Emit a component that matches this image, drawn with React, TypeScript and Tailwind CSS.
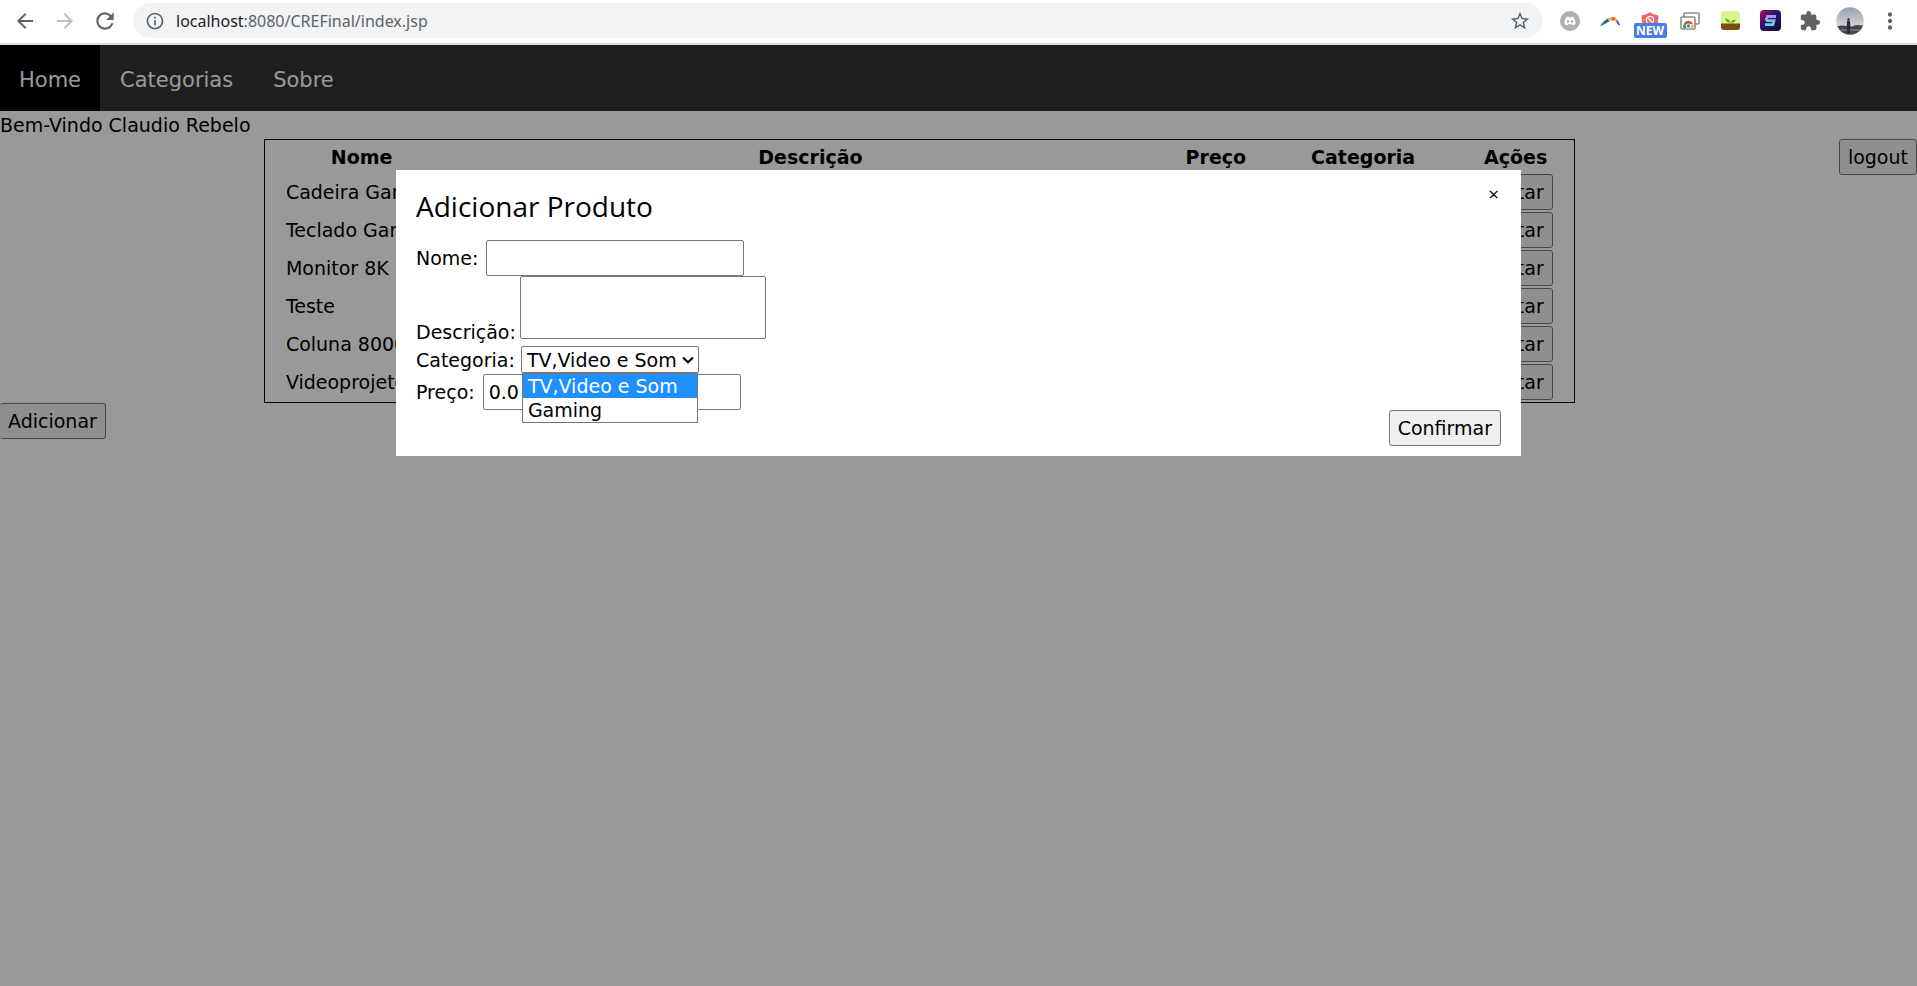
import React from "react";
import {
  MdArrowBack,
  MdArrowForward,
  MdExtension,
  MdInfoOutline,
  MdMoreVert,
  MdRefresh,
  MdStarBorder,
} from "react-icons/md";

const products = [
  "Cadeira Gaming",
  "Teclado Gaming",
  "Monitor 8K",
  "Teste",
  "Coluna 8000W",
  "Videoprojetor",
];

const columns = [
  { title: "Nome", width: "w-[14.6%]" },
  { title: "Descrição", width: "w-[54.3%]" },
  { title: "Preço", width: "w-[7.9%]" },
  { title: "Categoria", width: "w-[14.5%]" },
  { title: "Ações", width: "w-[8.7%]" },
];

const buttonStyle =
  "h-9 shrink-0 rounded-[3px] border border-[#767676] bg-[#efefef] px-2 leading-7 text-black";
const fieldStyle = "rounded-[2px] border border-[#767676] bg-white px-[5px] text-black";

function DiscordIcon() {
  return (
    <svg width="20" height="20" viewBox="0 0 20 20" aria-hidden="true">
      <circle cx="10" cy="10" r="10" fill="#b0b0b0" />
      <path
        d="M6.600 6.200 8.400 5.600l.5.8h2.200l.5-.8 1.800.6c1.400 1.800 2.200 4.200 2 6.800-.9.8-1.900 1.200-2.900 1.400l-.7-1.100H8.200l-.7 1.100c-1-.2-2-.6-2.900-1.400-.2-2.600.6-5 2-7.200z"
        fill="#fff"
      />
      <circle cx="8" cy="10.400" r="1.200" fill="#a4a4a4" />
      <circle cx="12" cy="10.400" r="1.200" fill="#a4a4a4" />
    </svg>
  );
}

function BoomerangIcon() {
  return (
    <svg width="20" height="20" viewBox="0 0 20 20" aria-hidden="true">
      <path d="M0 14.500 4 10.300 6.200 12.200 1.800 14.800z" fill="#2e8b57" />
      <path d="M3.600 10.600 8.200 7.200 9.400 10.200 5.400 12.600z" fill="#1d5fae" />
      <path d="M7.800 7.400 12 6 11.800 9.200 9 10.400z" fill="#f6b93b" />
      <path d="M11.600 6 15.400 6.400 14.600 9.800 11.600 9.200z" fill="#e8573a" />
      <path d="M15 6.300 17.600 8.800 16.600 11.600 14.200 9.600z" fill="#f6b93b" />
      <path d="M17.400 8.600 20 14 18.600 14.600 16.400 11.400z" fill="#1d5fae" />
    </svg>
  );
}

function BlockerIcon() {
  return (
    <span className="relative flex h-full w-full justify-center">
      <svg className="mt-3" width="20" height="20" viewBox="0 0 20 20" aria-hidden="true">
        <path d="M10 0 13 2 18.500 3.500 18 14 10 19 2 14 1.500 3.500 7 2z" fill="#ee6a6e" />
        <circle cx="10" cy="8" r="3.600" fill="none" stroke="#fff" strokeWidth="1.200" />
        <path d="m8 6 4 4" stroke="#fff" strokeWidth="1.200" />
      </svg>
      <span className="absolute top-[23px] h-[15px] w-[33px] rounded-[2px] bg-[#4a7de4] text-center font-['Open_Sans',sans-serif] text-xs leading-[15px] font-bold text-white">
        NEW
      </span>
    </span>
  );
}

function TabsIcon() {
  return (
    <svg width="20" height="18" viewBox="0 0 20 18" aria-hidden="true">
      <rect x="4" y="1" width="15" height="11" rx="1" fill="#fff" stroke="#8c8c8c" strokeWidth="1.600" />
      <rect x="1" y="5" width="14" height="12" rx="1" fill="#fff" stroke="#8c8c8c" strokeWidth="1.600" />
      <path d="M3 16a5.300 5.300 0 0 1 1.500-5L8 14v2z" fill="#2da94f" />
      <path d="M3.800 11.500a5.200 5.200 0 0 1 9.200 0l-4.500 1.500z" fill="#e8453c" />
      <path d="M13 11.500a5 5 0 0 1 .4 4.500H9z" fill="#fbc116" />
      <circle cx="8.500" cy="14" r="2.200" fill="#4285f4" stroke="#fff" />
    </svg>
  );
}

function PlantIcon() {
  return (
    <svg width="19" height="19" viewBox="0 0 19 19" aria-hidden="true">
      <rect width="19" height="19" rx="3" fill="#d8f690" />
      <path d="M0 12.500h19V16a3 3 0 0 1-3 3H3a3 3 0 0 1-3-3z" fill="#7c4a14" />
      <path
        d="M9.200 12.500c0-3-1.700-4.500-5-5 .2 2.700 1.900 4 4.300 3.900zM9.800 12.500c0-2.400 1.600-3.500 4.800-3.900-.2 2.200-1.800 3.300-4.200 3.300z"
        fill="#6aa51c"
      />
    </svg>
  );
}

function SIcon() {
  return (
    <svg width="21" height="21" viewBox="0 0 21 21" aria-hidden="true">
      <defs>
        <linearGradient id="s-back" x1="0" y1="0" x2="1" y2="1">
          <stop offset="0" stopColor="#b3134d" />
          <stop offset=".4" stopColor="#35126b" />
          <stop offset="1" stopColor="#120b3c" />
        </linearGradient>
        <linearGradient id="s-front" x1="0" y1="0" x2="0" y2="1">
          <stop offset="0" stopColor="#b88cf0" />
          <stop offset="1" stopColor="#46e3d2" />
        </linearGradient>
      </defs>
      <rect width="21" height="21" rx="4" fill="url(#s-back)" />
      <path
        d="M16 6.500H7.500L6.300 9.500l.9 1.200H14l-1.200 4H5"
        fill="none"
        stroke="url(#s-front)"
        strokeWidth="2.800"
      />
    </svg>
  );
}

function Avatar() {
  return (
    <svg width="28" height="28" viewBox="0 0 28 28" aria-hidden="true">
      <defs>
        <clipPath id="avatar-clip">
          <circle cx="14" cy="14" r="13.700" />
        </clipPath>
        <linearGradient id="avatar-sky" x1="0" y1="0" x2="0" y2="1">
          <stop offset="0" stopColor="#93a0b3" />
          <stop offset="1" stopColor="#d9d5d8" />
        </linearGradient>
      </defs>
      <g clipPath="url(#avatar-clip)">
        <rect width="28" height="20" fill="url(#avatar-sky)" />
        <path d="M0 19.500 6 18.500l10 1 4-1.500 8 .5V28H0z" fill="#46434a" />
        <path d="M0 22h28v2H0z" fill="#6f696c" />
        <circle cx="12.500" cy="12.500" r="1.200" fill="#1c2233" />
        <path d="M11 14h3l.4 5-.6 7h-2.400l-.6-7z" fill="#232a44" />
      </g>
    </svg>
  );
}

function BrowserBar() {
  const actions = [
    { name: "Discord", icon: <DiscordIcon /> },
    { name: "Boomerang", icon: <BoomerangIcon /> },
    { name: "Blocker", icon: <BlockerIcon /> },
    { name: "Tabs", icon: <TabsIcon /> },
    { name: "Plant", icon: <PlantIcon /> },
    { name: "S", icon: <SIcon /> },
    { name: "Extensions", icon: <MdExtension size={22} /> },
    { name: "Profile", icon: <Avatar /> },
    { name: "Menu", icon: <MdMoreVert size={26} /> },
  ];
  return (
    <header className="flex h-[45px] items-start border-b-2 border-[#dadce0] bg-white pr-[7px] pl-[5px] text-[#5f6368]">
      <button aria-label="Back" className="flex h-[41px] w-10 items-center justify-center">
        <MdArrowBack size={24} />
      </button>
      <button
        aria-label="Forward"
        className="flex h-[41px] w-10 items-center justify-center text-[#bcbec0]"
      >
        <MdArrowForward size={24} />
      </button>
      <button aria-label="Reload" className="flex h-[41px] w-10 items-center justify-center">
        <MdRefresh size={26} />
      </button>
      <div className="mt-[3px] mr-[7px] ml-2 flex h-[35px] flex-1 items-center rounded-full bg-[#f1f3f4] px-3">
        <MdInfoOutline size={20} />
        <p className="ml-[11px] flex-1 font-['Noto_Sans',sans-serif] text-base">
          <span className="text-[#202124]">localhost</span>:8080/CREFinal/index.jsp
        </p>
        <button aria-label="Bookmark">
          <MdStarBorder size={22} />
        </button>
      </div>
      {actions.map((action) => (
        <button
          key={action.name}
          aria-label={action.name}
          className="flex h-[41px] w-10 items-center justify-center"
        >
          {action.icon}
        </button>
      ))}
    </header>
  );
}

function CategorySelect() {
  return (
    <div className="relative">
      <select
        id="categoria"
        className="block h-[27px] w-[178px] appearance-none rounded-[2px] border border-[#767676] bg-white px-[5px] leading-6 text-black"
      >
        <option>TV,Video e Som</option>
        <option>Gaming</option>
      </select>
      <svg
        className="pointer-events-none absolute top-[9px] right-[5px]"
        width="12"
        height="10"
        viewBox="0 0 12 10"
        aria-hidden="true"
      >
        <path d="m1 2.500 5 4.800 5-4.800" fill="none" stroke="#000" strokeWidth="2" />
      </svg>
      <ul
        role="listbox"
        aria-label="Categoria"
        className="absolute top-full left-px w-44 border border-[#767676] bg-white leading-6"
      >
        <li
          role="option"
          aria-selected="true"
          className="bg-[#1e90ff] px-[5px] whitespace-nowrap text-white"
        >
          TV,Video e Som
        </li>
        <li role="option" aria-selected="false" className="px-[5px] whitespace-nowrap">
          Gaming
        </li>
      </ul>
    </div>
  );
}

function ProductDialog() {
  return (
    <div className="absolute inset-0 flex items-start justify-center bg-black/40 pt-[125px]">
      <form
        role="dialog"
        aria-labelledby="dialog-title"
        className="relative w-full max-w-[1125px] bg-white px-5 pt-3 pb-[10px]"
        onSubmit={(event) => event.preventDefault()}
      >
        <button
          type="button"
          aria-label="Fechar"
          className="absolute top-0 right-0 px-[22px] py-[10px] font-['Open_Sans',sans-serif] leading-7"
        >
          ×
        </button>
        <h3
          id="dialog-title"
          className="mb-[10px] font-['Open_Sans',sans-serif] text-[28px] leading-[48px]"
        >
          Adicionar Produto
        </h3>
        <div className="flex items-center gap-2">
          <label htmlFor="nome">Nome:</label>
          <input id="nome" type="text" className={`h-9 w-[258px] ${fieldStyle}`} />
        </div>
        <div className="flex items-end gap-1">
          <label htmlFor="descricao">Descrição:</label>
          <textarea
            id="descricao"
            className={`mb-[7px] block h-[63px] w-[246px] resize-none ${fieldStyle}`}
          />
        </div>
        <div className="flex h-7 items-start gap-[6px]">
          <label htmlFor="categoria">Categoria:</label>
          <CategorySelect />
        </div>
        <div className="flex items-center gap-2">
          <label htmlFor="preco">Preço:</label>
          <input
            id="preco"
            type="text"
            defaultValue="0.0"
            className={`h-9 w-[258px] ${fieldStyle}`}
          />
        </div>
        <div className="flex justify-end">
          <button type="submit" className={buttonStyle}>
            Confirmar
          </button>
        </div>
      </form>
    </div>
  );
}

export default function App() {
  return (
    <div className="flex min-h-screen flex-col bg-white font-['DejaVu_Sans',sans-serif] text-[19px] leading-7 text-black">
      <BrowserBar />
      <main className="relative flex-1">
        <nav className="flex h-[66px] bg-[#333] text-[21px] text-white">
          <a href="#home" className="flex items-center bg-black px-[19px] pt-[3px]">
            Home
          </a>
          <a href="#categorias" className="flex items-center px-5 pt-[3px]">
            Categorias
          </a>
          <a href="#sobre" className="flex items-center px-5 pt-[3px]">
            Sobre
          </a>
        </nav>
        <p>Bem-Vindo Claudio Rebelo</p>
        <div className="flex items-start">
          <div className="flex flex-1 justify-center">
            <table className="w-[71.3%] table-fixed border-separate border-spacing-[2px] border border-black">
              <thead>
                <tr>
                  {columns.map((column) => (
                    <th
                      key={column.title}
                      className={`${column.width} h-[30px] p-0 text-center font-bold`}
                    >
                      {column.title}
                    </th>
                  ))}
                </tr>
              </thead>
              <tbody>
                {products.map((name) => (
                  <tr key={name}>
                    <td className="py-0 pl-[19px] whitespace-nowrap">{name}</td>
                    <td />
                    <td />
                    <td />
                    <td className="p-0 text-center">
                      <button className={`mx-auto block ${buttonStyle}`}>Editar</button>
                    </td>
                  </tr>
                ))}
              </tbody>
            </table>
          </div>
          <button className={buttonStyle}>logout</button>
        </div>
        <button className={`border-l-0 ${buttonStyle}`}>Adicionar</button>
        <ProductDialog />
      </main>
    </div>
  );
}
